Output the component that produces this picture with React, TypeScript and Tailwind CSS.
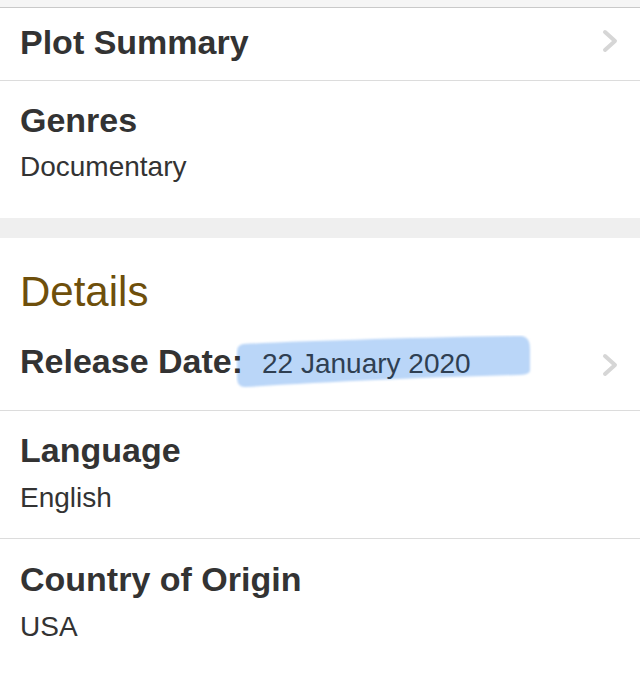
import React from 'react';

function Chevron({ className = '' }: { className?: string }) {
  return (
    <svg width="18" height="26" viewBox="0 0 18 26" className={className}>
      <path d="M4 4 L14 13 L4 22" fill="none" stroke="#d6d6d6" strokeWidth="4" strokeLinecap="round" strokeLinejoin="round" />
    </svg>
  );
}

function Highlight() {
  // marker stroke drawn behind the release date
  return (
    <svg
      width="296"
      height="54"
      viewBox="0 0 296 54"
      className="absolute left-[-26px] top-[-12px] z-0"
      aria-hidden
    >
      <defs>
        <filter id="soft" x="-5%" y="-20%" width="110%" height="140%">
          <feGaussianBlur stdDeviation="0.8" />
        </filter>
      </defs>
      <path
        d="M7 9 C70 6 200 2 286 1 Q294 2 294 14 L294 36 Q293 40 282 40 C200 42 90 47 10 52 Q2 53 1 44 L1 17 Q1 10 7 9 Z"
        fill="#bad6f8"
        filter="url(#soft)"
      />
    </svg>
  );
}

export default function App() {
  return (
    <div className="w-[640px] h-[674px] overflow-hidden bg-white font-['Liberation_Sans',Arial,sans-serif] text-[#333333]">
      {/* top edge of previous section */}
      <div className="h-[7px] bg-[#f5f5f5]" />
      <div className="h-px bg-[#c9c9c9]" />

      {/* Plot Summary */}
      <div className="flex items-center justify-between h-[72px] pl-5 pr-[21px]">
        <span className="text-[34px] leading-[40px] font-bold -mt-1">Plot Summary</span>
        <Chevron className="mb-[6px]" />
      </div>
      <div className="h-px bg-[#dcdcdc]" />

      {/* Genres */}
      <div className="pl-5 pt-[19px] pb-[34px]">
        <div className="text-[34px] leading-[40px] font-bold">Genres</div>
        <div className="text-[28px] leading-[34px] mt-[10px]">Documentary</div>
      </div>

      <div className="h-[20px] bg-[#efefef]" />

      {/* Details */}
      <div className="pl-5 pr-[21px] pt-[30px] pb-[29px]">
        <h2 className="text-[42px] leading-[48px] text-[#6e4f0b]">Details</h2>
        <div className="flex items-center justify-between h-[40px] mt-[25px]">
          <div className="flex items-baseline isolate">
            <span className="relative z-10 text-[34px] leading-[40px] font-bold">Release Date:</span>
            <span className="relative ml-[19px] text-[28px] leading-[34px] text-[#2f3f52]">
              <Highlight />
              <span className="relative z-10">22 January 2020</span>
            </span>
          </div>
          <Chevron className="mt-2" />
        </div>
      </div>
      <div className="h-px bg-[#dcdcdc]" />

      {/* Language */}
      <div className="pl-5 pt-[19px] pb-[23px]">
        <div className="text-[34px] leading-[40px] font-bold">Language</div>
        <div className="text-[28px] leading-[34px] mt-[11px]">English</div>
      </div>
      <div className="h-px bg-[#dcdcdc]" />

      {/* Country of Origin */}
      <div className="pl-5 pt-[20px] pb-[23px]">
        <div className="text-[34px] leading-[40px] font-bold">Country of Origin</div>
        <div className="text-[28px] leading-[34px] mt-[11px]">USA</div>
      </div>
    </div>
  );
}
